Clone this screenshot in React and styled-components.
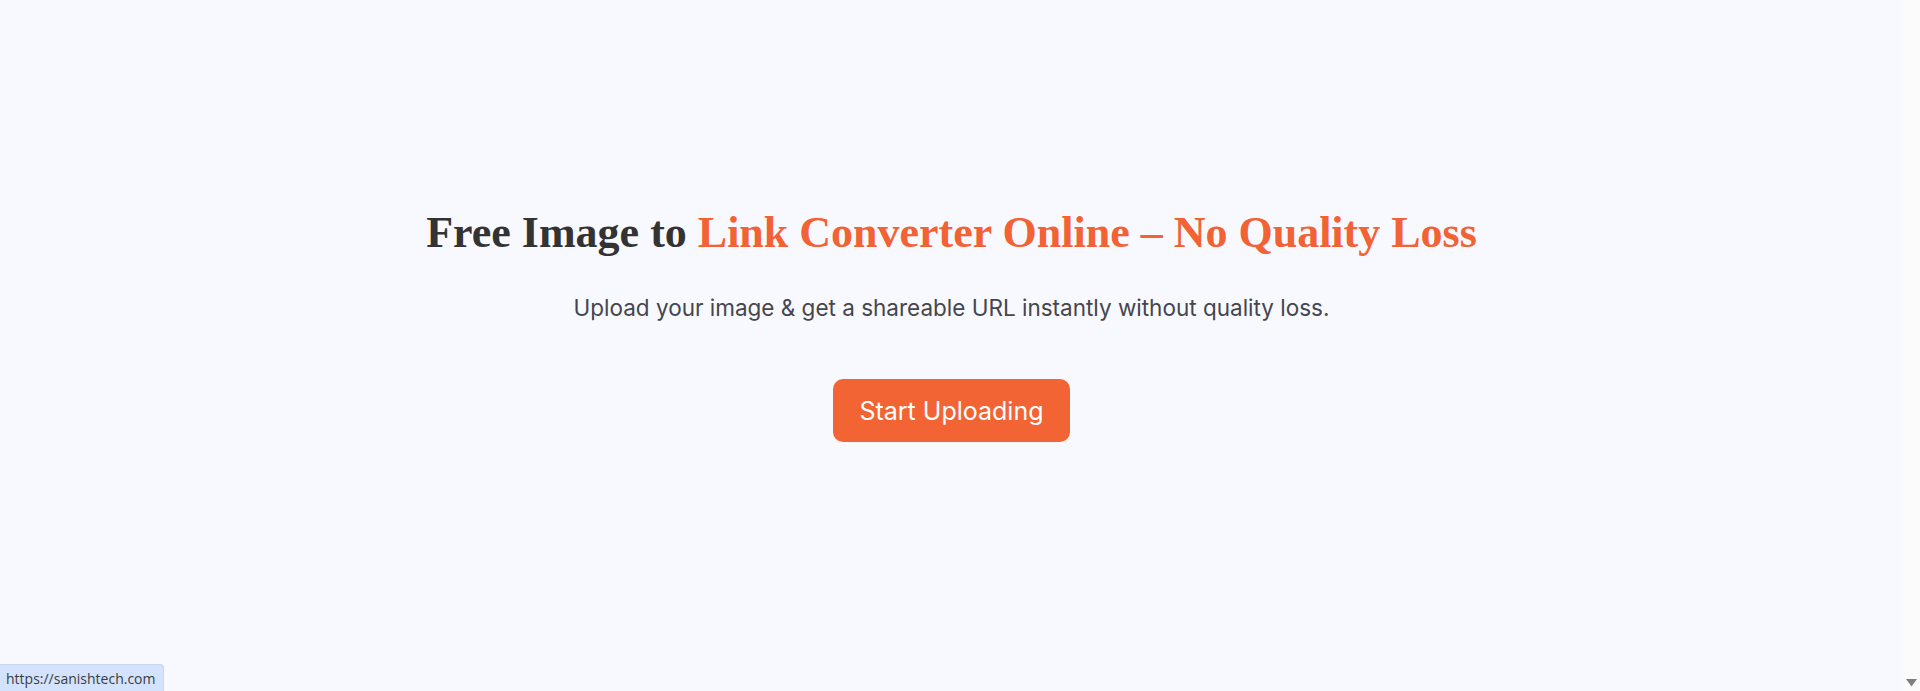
import React from "react"
import styled, { createGlobalStyle } from "styled-components"

const GlobalStyle = createGlobalStyle`
  html, body {
    margin: 0;
    padding: 0;
    height: 100%;
    overflow: hidden;
  }
  body {
    background: #f8f9fe;
    font-family: Inter, "Liberation Sans", sans-serif;
  }
`;

const Viewport = styled.div`
  display: flex;
  height: 691px;
  width: 1920px;
`;

const StyledHero = styled.section`
  flex: 1;
  display: flex;
  flex-direction: column;
  align-items: center;
  padding-top: 205px;
  background: #f8f9fe;

  h1 {
    margin: 0;
    font-family: "Liberation Serif", serif;
    font-weight: 700;
    font-size: 44px;
    line-height: 56px;
    color: #333333;
  }
  h1 span {
    color: #f26234;
  }
  p {
    margin: 32px 0 0;
    font-family: Inter, "Liberation Sans", sans-serif;
    font-size: 22.5px;
    line-height: 30px;
    color: #45464d;
  }
`;

const CtaButton = styled.button`
  margin-top: 56px;
  height: 63px;
  padding: 0 26px;
  border: 0;
  border-radius: 10px;
  background: #f26433;
  color: #ffffff;
  font-family: Inter, "Liberation Sans", sans-serif;
  font-size: 25px;
  cursor: pointer;
`;

const Scrollbar = styled.div`
  width: 17px;
  display: flex;
  flex-direction: column;
  justify-content: flex-end;
  align-items: center;
  padding-bottom: 4px;
  background: #fbfbfb;
  svg {
    display: block;
  }
`;

const StatusTip = styled.div`
  position: fixed;
  left: 0;
  bottom: 0;
  height: 26px;
  padding: 0 7px 0 6px;
  display: flex;
  align-items: center;
  background: #d3e3fd;
  border-top: 1px solid #c9d6ec;
  border-right: 1px solid #c9d6ec;
  border-top-right-radius: 4px;
  font-family: "Open Sans", "Liberation Sans", sans-serif;
  font-size: 14px;
  color: #3c3c3c;
`;

export default function App() {
  return (
    <>
      <GlobalStyle />
      <Viewport>
        <StyledHero>
          <h1>
            Free Image to <span>Link Converter Online – No Quality Loss</span>
          </h1>
          <p>Upload your image &amp; get a shareable URL instantly without quality loss.</p>
          <CtaButton>Start Uploading</CtaButton>
        </StyledHero>
        <Scrollbar>
          <svg width="11" height="8" viewBox="0 0 11 8">
            <path d="M0 0 H11 L5.5 7.5 Z" fill="#7f7f7f" />
          </svg>
        </Scrollbar>
      </Viewport>
      <StatusTip>https://sanishtech.com</StatusTip>
    </>
  );
}
